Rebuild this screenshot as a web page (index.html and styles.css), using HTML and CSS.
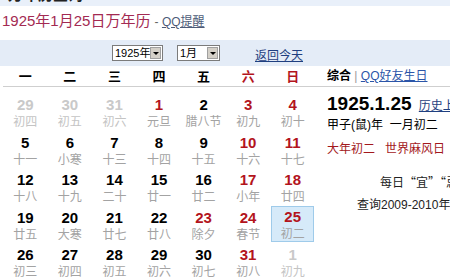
FILE: index.html
```html
<!DOCTYPE html>
<html lang="zh-CN">
<head>
    <meta charset="UTF-8">
    <title>1925年1月25日万年历</title>
    <link rel="stylesheet" href="styles.css">
</head>
<body>
    <!-- top strip (cut off) -->
    <div class="top-strip"><span>万年历查询</span></div>

    <h1 class="title">1925年1月25日万年历 <span class="sub">- <a href="#">QQ提醒</a></span></h1>

    <div class="toolbar">
        <div class="sel sel-year"><span>1925年</span><i class="sel-btn"></i></div>
        <div class="sel sel-month"><span>1月</span><i class="sel-btn"></i></div>
        <a href="#" class="today-link">返回今天</a>
    </div>

    <div class="main">
        <div class="cal">
            <div class="weekdays">
                <span>一</span><span>二</span><span>三</span><span>四</span><span>五</span>
                <span class="red">六</span><span class="red">日</span>
            </div>
            <div class="days">
                <div class="day other"><b>29</b><em>初四</em></div>
                <div class="day other"><b>30</b><em>初五</em></div>
                <div class="day other"><b>31</b><em>初六</em></div>
                <div class="day red"><b>1</b><em>元旦</em></div>
                <div class="day"><b>2</b><em>腊八节</em></div>
                <div class="day red"><b>3</b><em>初九</em></div>
                <div class="day red"><b>4</b><em>初十</em></div>

                <div class="day"><b>5</b><em>十一</em></div>
                <div class="day"><b>6</b><em>小寒</em></div>
                <div class="day"><b>7</b><em>十三</em></div>
                <div class="day"><b>8</b><em>十四</em></div>
                <div class="day"><b>9</b><em>十五</em></div>
                <div class="day red"><b>10</b><em>十六</em></div>
                <div class="day red"><b>11</b><em>十七</em></div>

                <div class="day"><b>12</b><em>十八</em></div>
                <div class="day"><b>13</b><em>十九</em></div>
                <div class="day"><b>14</b><em>二十</em></div>
                <div class="day"><b>15</b><em>廿一</em></div>
                <div class="day"><b>16</b><em>廿二</em></div>
                <div class="day red"><b>17</b><em>小年</em></div>
                <div class="day red"><b>18</b><em>廿四</em></div>

                <div class="day"><b>19</b><em>廿五</em></div>
                <div class="day"><b>20</b><em>大寒</em></div>
                <div class="day"><b>21</b><em>廿七</em></div>
                <div class="day"><b>22</b><em>廿八</em></div>
                <div class="day red"><b>23</b><em>除夕</em></div>
                <div class="day red"><b>24</b><em>春节</em></div>
                <div class="day red selected"><b>25</b><em>初二</em></div>

                <div class="day"><b>26</b><em>初三</em></div>
                <div class="day"><b>27</b><em>初四</em></div>
                <div class="day"><b>28</b><em>初五</em></div>
                <div class="day"><b>29</b><em>初六</em></div>
                <div class="day"><b>30</b><em>初七</em></div>
                <div class="day red"><b>31</b><em>初八</em></div>
                <div class="day other"><b>1</b><em>初九</em></div>
            </div>
        </div>

        <div class="side">
            <div class="side-head"><b>综合</b> <span class="pipe">|</span> <a href="#">QQ好友生日</a></div>
            <div class="side-body">
                <div class="big-date">1925.1.25 <a href="#">历史上的今天</a></div>
                <div class="lunar">甲子(鼠)年&nbsp;&nbsp;一月初二</div>
                <div class="fest">大年初二&nbsp;&nbsp;&nbsp;世界麻风日</div>
                <div class="daily">每日“宜”“忌”查询</div>
                <div class="query">查询2009-2010年放假安排</div>
            </div>
        </div>
    </div>
</body>
</html>
```

FILE: styles.css
```css
body {
    margin: 0;
    padding: 0;
    overflow: hidden;
    background: #fff;
    font-family: "Liberation Sans", Arial, "Noto Sans CJK SC", sans-serif;
    font-size: 12px;
    color: #000;
}

a {
    color: #1f3f80;
    text-decoration: underline;
}

/* top strip */
.top-strip {
    height: 6px;
    overflow: hidden;
    background: #e9f0fa;
}

.top-strip span {
    display: block;
    margin: -13px 0 0 8px;
    font-size: 15px;
    font-weight: bold;
    line-height: 16px;
    color: #222;
}

/* title */
.title {
    margin: 5px 0 8px 2px;
    font-size: 15px;
    line-height: 20px;
    font-weight: normal;
    color: #a32a52;
    white-space: nowrap;
}

.title .sub {
    font-size: 12px;
    color: #666;
}

.title .sub a {
    color: #4d5b78;
}

/* toolbar */
.toolbar {
    height: 26px;
    background: #e4ecf7;
    display: flex;
    align-items: center;
    padding-left: 112px;
}

.sel {
    box-sizing: border-box;
    height: 16px;
    border: 1px solid #7b7b7b;
    background: #fff;
    display: flex;
    align-items: center;
    justify-content: space-between;
    padding: 0 1px 0 2px;
    font-size: 11px;
    line-height: 14px;
    white-space: nowrap;
}

.sel-year {
    width: 51px;
    margin-right: 14px;
}

.sel-month {
    width: 43px;
}

.sel-btn {
    width: 11px;
    height: 12px;
    background: #d4d0c8;
    border: 1px solid #a0a0a0;
    box-sizing: border-box;
    display: flex;
    align-items: center;
    justify-content: center;
    flex-shrink: 0;
}

.sel-btn::after {
    content: "";
    border-left: 3px solid transparent;
    border-right: 3px solid transparent;
    border-top: 3px solid #000;
}

.today-link {
    margin-left: 35px;
    margin-top: 3px;
    font-size: 12px;
    color: #1f3f80;
}

/* main */
.main {
    display: flex;
}

.cal {
    width: 312px;
    margin-left: 3px;
    flex-shrink: 0;
}

.weekdays {
    display: grid;
    grid-template-columns: repeat(7, 1fr);
    height: 20px;
    line-height: 20px;
    border-bottom: 1px solid #cfcfcf;
    text-align: center;
    font-family: "Noto Sans CJK SC", sans-serif;
    font-weight: bold;
    font-size: 13px;
}

.weekdays .red {
    color: #b3141c;
}

.days {
    display: grid;
    grid-template-columns: repeat(7, 1fr);
    grid-auto-rows: 36px;
    row-gap: 1.5px;
    padding-top: 6px;
}

.day {
    margin: 0 1px;
    padding-top: 3px;
    text-align: center;
    box-sizing: border-box;
    border: 1px solid transparent;
}

.day b {
    display: block;
    font-size: 15px;
    line-height: 16px;
    color: #000;
}

.day em {
    display: block;
    font-style: normal;
    font-size: 12px;
    line-height: 16px;
    color: #a3a3a3;
    font-family: "Noto Sans CJK SC", sans-serif;
}

.day.red b {
    color: #b3141c;
}

.day.other b {
    color: #c9c9c9;
}

.day.other em {
    color: #c4c4c4;
}

.day.selected {
    background: #d6eaf9;
    border-color: #9fcbea;
    padding-top: 2px;
}

/* side panel */
.side {
    flex: 1;
    padding-left: 12px;
    white-space: nowrap;
}

.side-head {
    height: 20px;
    line-height: 20px;
    border-bottom: 1px solid #cfcfcf;
    margin-left: -12px;
    padding-left: 12px;
}

.side-head .pipe {
    color: #999;
}

.side-head a {
    color: #2b55a8;
}

.big-date {
    margin-top: 6px;
    font-size: 19px;
    font-weight: bold;
    line-height: 22px;
}

.big-date a {
    font-size: 12px;
    font-weight: normal;
    margin-left: 2px;
}

.lunar {
    line-height: 16px;
}

.fest {
    margin-top: 8px;
    line-height: 16px;
    color: #a3181c;
}

.daily {
    margin-top: 17px;
    padding-left: 53px;
    line-height: 16px;
    color: #222;
    font-family: "Noto Sans CJK SC", sans-serif;
    font-feature-settings: "fwid";
}

.query {
    margin-top: 7px;
    padding-left: 30px;
    line-height: 16px;
    color: #222;
}
```
